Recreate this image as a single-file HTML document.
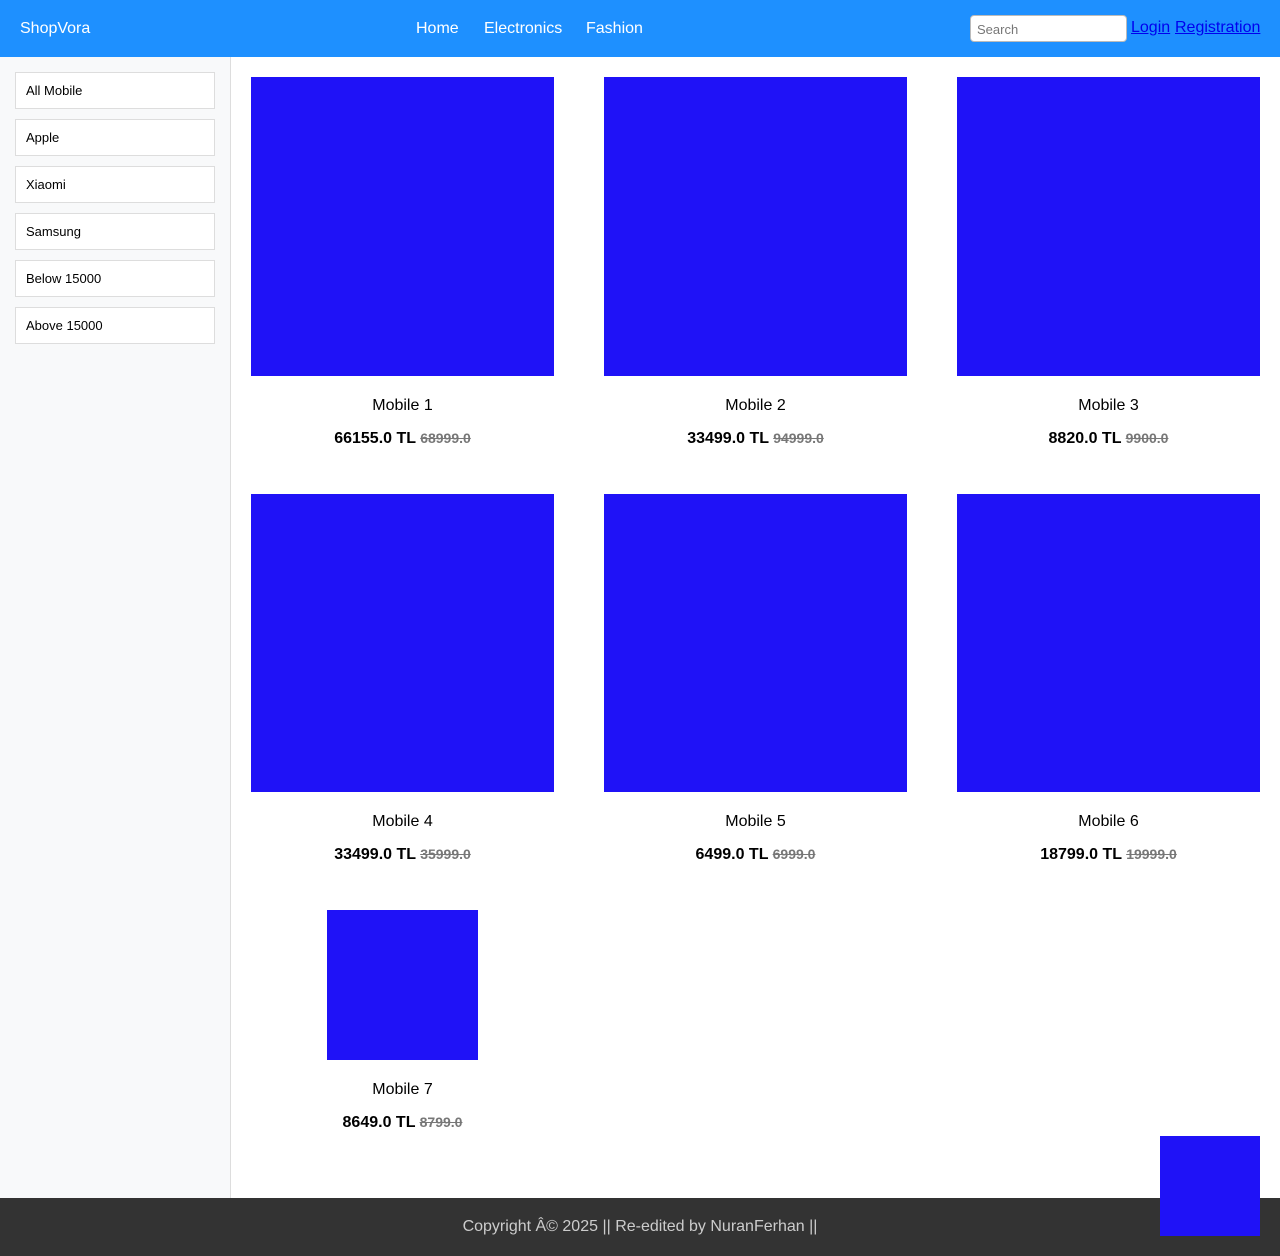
<!DOCTYPE html>
<html><head><meta charset="utf-8"><style>
*{margin:0;padding:0;box-sizing:border-box}
body{width:1280px;height:1256px;position:relative;font-family:"Liberation Sans",Arial,sans-serif;background:#fff;overflow:hidden}
.hdr{position:absolute;left:0;top:0;width:1280px;height:57px;background:#1e90ff;color:#fff;font-size:16px}
.hdr span{position:absolute;top:20px}
.search{position:absolute;left:970px;top:15px;width:157px;height:27px;background:#fff;border:1px solid #bbb;border-radius:4px;font-size:13px;color:#777;padding:6px 0 0 6px}
.lnk{position:absolute;top:19px;color:#0000ee;text-decoration:underline;font-size:16px}
.side{position:absolute;left:0;top:57px;width:231px;height:1141px;background:#f8f9fa;border-right:1px solid #ddd}
.btn{position:absolute;left:15px;width:200px;height:37px;background:#fff;border:1px solid #ddd;font-size:13px;padding:10px 0 0 10px;color:#000}
.img{position:absolute;background:#1f12f7}
.t{position:absolute;width:303px;text-align:center;font-size:16px;color:#000}
.p{position:absolute;width:303px;text-align:center;font-size:16px;font-weight:bold;color:#000}
.p s{color:#777;font-size:14px}
.ftr{position:absolute;left:0;top:1198px;width:1280px;height:58px;background:#333;color:#ccc;font-size:16px;text-align:center;padding-top:20px}
</style></head><body>
<div class="hdr">
<span style="left:20px">ShopVora</span>
<span style="left:416px">Home</span>
<span style="left:484px">Electronics</span>
<span style="left:586px">Fashion</span>
</div>
<div class="search">Search</div>
<a class="lnk" style="left:1131px">Login</a>
<a class="lnk" style="left:1175px">Registration</a>
<div class="side">
<div class="btn" style="top:15px">All Mobile</div>
<div class="btn" style="top:62px">Apple</div>
<div class="btn" style="top:109px">Xiaomi</div>
<div class="btn" style="top:156px">Samsung</div>
<div class="btn" style="top:203px">Below 15000</div>
<div class="btn" style="top:250px">Above 15000</div>
</div>

<div class="img" style="left:251px;top:77px;width:303px;height:299px"></div>
<div class="img" style="left:604px;top:77px;width:303px;height:299px"></div>
<div class="img" style="left:957px;top:77px;width:303px;height:299px"></div>
<div class="t" style="left:251px;top:397px">Mobile 1</div>
<div class="t" style="left:604px;top:397px">Mobile 2</div>
<div class="t" style="left:957px;top:397px">Mobile 3</div>
<div class="p" style="left:251px;top:430px">66155.0 TL <s>68999.0</s></div>
<div class="p" style="left:604px;top:430px">33499.0 TL <s>94999.0</s></div>
<div class="p" style="left:957px;top:430px">8820.0 TL <s>9900.0</s></div>

<div class="img" style="left:251px;top:494px;width:303px;height:298px"></div>
<div class="img" style="left:604px;top:494px;width:303px;height:298px"></div>
<div class="img" style="left:957px;top:494px;width:303px;height:298px"></div>
<div class="t" style="left:251px;top:813px">Mobile 4</div>
<div class="t" style="left:604px;top:813px">Mobile 5</div>
<div class="t" style="left:957px;top:813px">Mobile 6</div>
<div class="p" style="left:251px;top:846px">33499.0 TL <s>35999.0</s></div>
<div class="p" style="left:604px;top:846px">6499.0 TL <s>6999.0</s></div>
<div class="p" style="left:957px;top:846px">18799.0 TL <s>19999.0</s></div>

<div class="img" style="left:327px;top:910px;width:151px;height:150px"></div>
<div class="t" style="left:251px;top:1081px">Mobile 7</div>
<div class="p" style="left:251px;top:1114px">8649.0 TL <s>8799.0</s></div>

<div class="ftr">Copyright Â© 2025 || Re-edited by NuranFerhan ||</div>
<div class="img" style="left:1160px;top:1136px;width:100px;height:100px"></div>
</body></html>
